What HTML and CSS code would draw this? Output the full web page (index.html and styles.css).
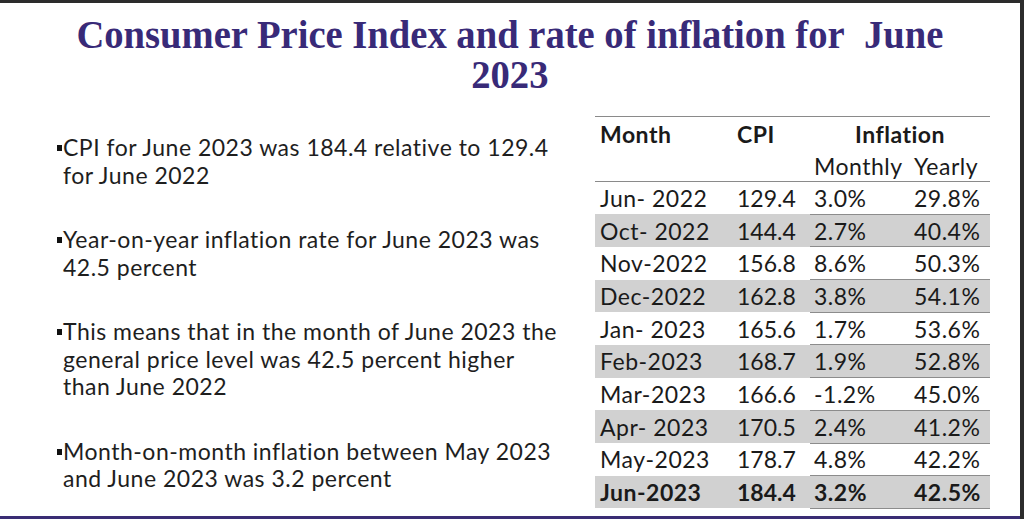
FILE: index.html
```html
<!DOCTYPE html>
<html lang="en">
<head>
<meta charset="utf-8">
<title>Consumer Price Index and rate of inflation for June 2023</title>
<link rel="stylesheet" href="styles.css">
</head>
<body>
<div class="slide">
  <h1 class="title"><span class="title-text">Consumer Price Index and rate of inflation for&nbsp; June<br>2023</span></h1>
  <div class="content">
    <ul class="points">
      <li><span class="mark"></span><span class="txt">CPI for June 2023 was 184.4 relative to 129.4<br>for June 2022</span></li>
      <li><span class="mark"></span><span class="txt">Year-on-year inflation rate for June 2023 was<br>42.5 percent</span></li>
      <li><span class="mark"></span><span class="txt">This means that in the month of June 2023 the<br>general price level was 42.5 percent higher<br>than June 2022</span></li>
      <li><span class="mark"></span><span class="txt">Month-on-month inflation between May 2023<br>and June 2023 was 3.2 percent</span></li>
    </ul>
    <table class="cpi">
      <colgroup><col class="w-month"><col class="w-cpi"><col class="w-mon"><col class="w-yr"></colgroup>
      <thead>
        <tr class="hrow1"><th class="c-month">Month</th><th class="c-cpi">CPI</th><th class="c-infl" colspan="2">Inflation</th></tr>
        <tr class="hrow2"><td></td><td></td><td class="c-mon">Monthly</td><td class="c-yr">Yearly</td></tr>
      </thead>
      <tbody>
        <tr><td class="c-month">Jun- 2022</td><td class="c-cpi">129.4</td><td class="c-mon">3.0%</td><td class="c-yr">29.8%</td></tr>
        <tr class="shade"><td class="c-month">Oct- 2022</td><td class="c-cpi">144.4</td><td class="c-mon">2.7%</td><td class="c-yr">40.4%</td></tr>
        <tr><td class="c-month">Nov-2022</td><td class="c-cpi">156.8</td><td class="c-mon">8.6%</td><td class="c-yr">50.3%</td></tr>
        <tr class="shade"><td class="c-month">Dec-2022</td><td class="c-cpi">162.8</td><td class="c-mon">3.8%</td><td class="c-yr">54.1%</td></tr>
        <tr><td class="c-month">Jan- 2023</td><td class="c-cpi">165.6</td><td class="c-mon">1.7%</td><td class="c-yr">53.6%</td></tr>
        <tr class="shade"><td class="c-month">Feb-2023</td><td class="c-cpi">168.7</td><td class="c-mon">1.9%</td><td class="c-yr">52.8%</td></tr>
        <tr><td class="c-month">Mar-2023</td><td class="c-cpi">166.6</td><td class="c-mon">-1.2%</td><td class="c-yr">45.0%</td></tr>
        <tr class="shade"><td class="c-month">Apr- 2023</td><td class="c-cpi">170.5</td><td class="c-mon">2.4%</td><td class="c-yr">41.2%</td></tr>
        <tr><td class="c-month">May-2023</td><td class="c-cpi">178.7</td><td class="c-mon">4.8%</td><td class="c-yr">42.2%</td></tr>
        <tr class="shade bold"><td class="c-month">Jun-2023</td><td class="c-cpi">184.4</td><td class="c-mon">3.2%</td><td class="c-yr">42.5%</td></tr>
      </tbody>
    </table>
  </div>
</div>
</body>
</html>
```

FILE: styles.css
```css
html, body {
  margin: 0;
  padding: 0;
  background: #2c2c2c;
  overflow: hidden;
}

.slide {
  width: 1020px;
  height: 513px;
  margin-top: 3px;
  background: #ffffff;
  border-bottom: 3px solid #3a2d74;
  font-family: "Lato", "Open Sans", sans-serif;
  color: #1e1e1e;
}

.title {
  margin: 0;
  padding-top: 12px;
  text-align: center;
  font-family: "Liberation Serif", serif;
  font-weight: bold;
  font-size: 39px;
  line-height: 40px;
  color: #382a78;
}

.title-text {
  display: inline-block;
  transform: scaleX(0.99);
  transform-origin: center;
}

.content {
  display: flex;
  align-items: flex-start;
  margin-top: 21px;
}

.points {
  list-style: none;
  margin: 0;
  padding: 18px 0 0 57px;
  width: 595px;
  flex: none;
  box-sizing: border-box;
  font-size: 23px;
  letter-spacing: 0.5px;
  line-height: 27.5px;
}

.points li {
  display: flex;
  align-items: flex-start;
  margin-bottom: 37px;
}

.mark {
  flex: none;
  width: 5px;
  height: 6px;
  margin: 11px 1px 0 0;
  background: #111111;
}

.cpi {
  border-collapse: collapse;
  table-layout: fixed;
  width: 395px;
  font-size: 23px;
  letter-spacing: 0.5px;
  color: #1a1a1a;
}

.w-month { width: 140px; }
.w-cpi { width: 75px; }
.w-mon { width: 100px; }
.w-yr { width: 80px; }

.cpi th, .cpi td {
  padding: 0;
  text-align: left;
  vertical-align: middle;
  white-space: nowrap;
}

.cpi tbody .c-cpi {
  letter-spacing: 0;
}

.hrow1 {
  height: 34px;
  border-top: 1px solid #8a8a8a;
}

.hrow1 th {
  font-weight: bold;
}

.hrow1 .c-infl {
  text-align: center;
}

.hrow2 {
  height: 31px;
  border-bottom: 1px solid #8a8a8a;
}

.cpi tbody tr {
  height: 32.7px;
}

.c-month { padding-left: 5px !important; }
.c-cpi { padding-left: 2px !important; }
.c-mon { padding-left: 4px !important; }
.c-yr { padding-left: 4px !important; }

.shade td {
  background: #d1d1d1;
}

.shade .c-mon, .shade .c-yr {
  border-top: 1px solid #8c8c8c;
  border-bottom: 1px solid #8c8c8c;
}

.bold td {
  font-weight: bold;
}
```
